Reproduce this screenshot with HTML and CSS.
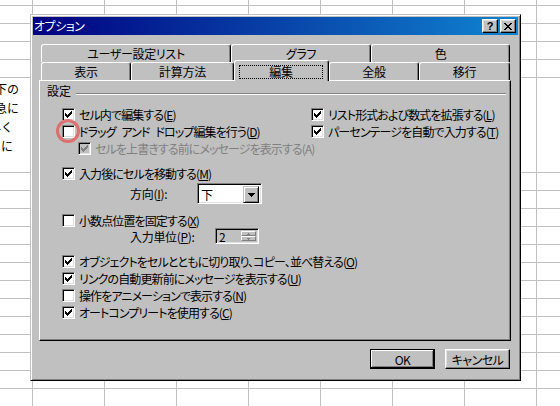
FILE: index.html
```html
<!DOCTYPE html>
<html lang="ja">
<head>
<meta charset="utf-8">
<title>オプション</title>
<link rel="stylesheet" href="styles.css">
</head>
<body>
<div class="sheet">
  <div class="row r-top"></div>
  <div class="row"></div>
  <div class="row"></div>
  <div class="row"></div>
  <div class="row"></div>
  <div class="row r-tall">
    <div class="cell-a">
      <div class="ln ln-long"><span>以下の</span></div>
      <div class="ln ln-long"><span>緊急に</span></div>
      <div class="ln ln-short"><span>早く</span></div>
      <div class="ln ln-short"><span>ように</span></div>
    </div>
  </div>
  <div class="row"></div>
  <div class="row"></div>
  <div class="row"></div>
  <div class="row"></div>
  <div class="row"></div>
  <div class="row"></div>
  <div class="row"></div>
  <div class="row"></div>
  <div class="row"></div>
  <div class="row"></div>
  <div class="row"></div>
  <div class="row"></div>
  <div class="row"></div>
</div>

<div class="dialog">
  <div class="titlebar">
    <span class="title">オプション</span>
    <span class="tbtn help">?</span>
    <span class="tbtn close"><svg width="8" height="7" viewBox="0 0 8 7" shape-rendering="crispEdges"><path fill="#000" d="M0 0h2v1H0zM6 0h2v1H6zM1 1h2v1H1zM5 1h2v1H5zM2 2h4v1H2zM3 3h2v1H3zM2 4h4v1H2zM1 5h2v1H1zM5 5h2v1H5zM0 6h2v1H0zM6 6h2v1H6z"/></svg></span>
  </div>
  <div class="body">
    <div class="tabrow back">
      <div class="tab t-user">ユーザー設定リスト</div>
      <div class="tab t-graph">グラフ</div>
      <div class="tab t-color">色</div>
    </div>
    <div class="tabrow front">
      <div class="tab t-view">表示</div>
      <div class="tab t-calc">計算方法</div>
      <div class="tab t-edit sel"><span class="focus">編集</span></div>
      <div class="tab t-gen">全般</div>
      <div class="tab t-mig">移行</div>
    </div>
    <div class="panel">
      <div class="grouphead"><span class="lbl">設定</span><span class="rule"></span></div>
      <div class="opts">
        <div class="top2">
          <div class="stack col-l">
            <div class="chk"><span class="box"><svg width="7" height="7" viewBox="0 0 7 7" shape-rendering="crispEdges"><path d="M0 2h1v3H0zM1 3h1v3H1zM2 4h1v3H2zM3 3h1v3H3zM4 2h1v3H4zM5 1h1v3H5zM6 0h1v3H6z"/></svg></span><span class="txt">セル内で編集する(<u>E</u>)</span></div>
            <div class="chk"><span class="box"><span class="ring"></span></span><span class="txt">ドラッグ アンド ドロップ編集を行う(<u>D</u>)</span></div>
            <div class="chk sub dis"><span class="box"><svg width="7" height="7" viewBox="0 0 7 7" shape-rendering="crispEdges"><path d="M0 2h1v3H0zM1 3h1v3H1zM2 4h1v3H2zM3 3h1v3H3zM4 2h1v3H4zM5 1h1v3H5zM6 0h1v3H6z"/></svg></span><span class="txt">セルを上書きする前にメッセージを表示する(A)</span></div>
          </div>
          <div class="stack col-r">
            <div class="chk"><span class="box"><svg width="7" height="7" viewBox="0 0 7 7" shape-rendering="crispEdges"><path d="M0 2h1v3H0zM1 3h1v3H1zM2 4h1v3H2zM3 3h1v3H3zM4 2h1v3H4zM5 1h1v3H5zM6 0h1v3H6z"/></svg></span><span class="txt">リスト形式および数式を拡張する(<u>L</u>)</span></div>
            <div class="chk"><span class="box"><svg width="7" height="7" viewBox="0 0 7 7" shape-rendering="crispEdges"><path d="M0 2h1v3H0zM1 3h1v3H1zM2 4h1v3H2zM3 3h1v3H3zM4 2h1v3H4zM5 1h1v3H5zM6 0h1v3H6z"/></svg></span><span class="txt">パーセンテージを自動で入力する(<u>T</u>)</span></div>
          </div>
        </div>

        <div class="chk move"><span class="box"><svg width="7" height="7" viewBox="0 0 7 7" shape-rendering="crispEdges"><path d="M0 2h1v3H0zM1 3h1v3H1zM2 4h1v3H2zM3 3h1v3H3zM4 2h1v3H4zM5 1h1v3H5zM6 0h1v3H6z"/></svg></span><span class="txt">入力後にセルを移動する(<u>M</u>)</span></div>
        <div class="field f-dir">
          <span class="flbl lbl-dir">方向(<u>I</u>):</span>
          <span class="combo"><span class="val">下</span><span class="drop"><svg width="7" height="4" viewBox="0 0 7 4" shape-rendering="crispEdges"><path d="M0 0h7v1H0zM1 1h5v1H1zM2 2h3v1H2zM3 3h1v1H3z"/></svg></span></span>
        </div>

        <div class="chk fixed"><span class="box"></span><span class="txt">小数点位置を固定する(<u>X</u>)</span></div>
        <div class="field f-unit">
          <span class="flbl lbl-unit">入力単位(<u>P</u>):</span>
          <span class="spin"><span class="val">2</span><span class="spinbtns"><span class="sb"><svg width="3" height="2" viewBox="0 0 3 2" shape-rendering="crispEdges"><path fill="#808080" d="M1 0h1v1H1zM0 1h3v1H0z"/></svg></span><span class="sb"><svg width="3" height="2" viewBox="0 0 3 2" shape-rendering="crispEdges"><path fill="#808080" d="M0 0h3v1H0zM1 1h1v1H1z"/></svg></span></span></span>
        </div>

        <div class="stack bottom4">
          <div class="chk"><span class="box"><svg width="7" height="7" viewBox="0 0 7 7" shape-rendering="crispEdges"><path d="M0 2h1v3H0zM1 3h1v3H1zM2 4h1v3H2zM3 3h1v3H3zM4 2h1v3H4zM5 1h1v3H5zM6 0h1v3H6z"/></svg></span><span class="txt">オブジェクトをセルとともに切り取り、コピー、並べ替える(<u>O</u>)</span></div>
          <div class="chk"><span class="box"><svg width="7" height="7" viewBox="0 0 7 7" shape-rendering="crispEdges"><path d="M0 2h1v3H0zM1 3h1v3H1zM2 4h1v3H2zM3 3h1v3H3zM4 2h1v3H4zM5 1h1v3H5zM6 0h1v3H6z"/></svg></span><span class="txt">リンクの自動更新前にメッセージを表示する(<u>U</u>)</span></div>
          <div class="chk"><span class="box"></span><span class="txt">操作をアニメーションで表示する(<u>N</u>)</span></div>
          <div class="chk"><span class="box"><svg width="7" height="7" viewBox="0 0 7 7" shape-rendering="crispEdges"><path d="M0 2h1v3H0zM1 3h1v3H1zM2 4h1v3H2zM3 3h1v3H3zM4 2h1v3H4zM5 1h1v3H5zM6 0h1v3H6z"/></svg></span><span class="txt">オートコンプリートを使用する(<u>C</u>)</span></div>
        </div>
      </div>
    </div>
    <div class="buttons">
      <span class="btn def">OK</span>
      <span class="btn">キャンセル</span>
    </div>
  </div>
</div>
</body>
</html>
```
FILE: styles.css
```css
* { box-sizing: border-box; }
html, body { margin: 0; padding: 0; }
body {
  width: 560px;
  height: 406px;
  overflow: hidden;
  position: relative;
  background: #fff;
  font-family: "Noto Sans CJK JP", "Noto Sans", sans-serif;
  font-size: 12px;
  color: #000;
}

/* spreadsheet behind */
.sheet {
  width: 560px;
  height: 406px;
  overflow: hidden;
  background: linear-gradient(90deg, #c0c0c0 1px, transparent 1px) 32px 0 / 72px 100% repeat-x;
}
.row { height: 18px; border-bottom: 1px solid #c0c0c0; }
.r-top { height: 6px; }
.r-tall { height: 95px; }
.cell-a { width: 32px; overflow: hidden; padding-top: 1px; }
.ln { display: flex; justify-content: flex-end; height: 19px; line-height: 19px; white-space: nowrap; }
.ln-long { padding-right: 13px; }
.ln-short { padding-right: 19px; }

/* dialog window */
.dialog {
  position: absolute;
  left: 30px;
  top: 14px;
  width: 491px;
  height: 367px;
  padding: 2px;
  background: #c0c0c0;
  border: 1px solid;
  border-color: #c0c0c0 #000 #000 #c0c0c0;
  box-shadow: inset 1px 1px #fff, inset -1px -1px #808080;
  font-feature-settings: "palt";
}
.titlebar {
  height: 18px;
  display: flex;
  align-items: center;
  padding: 0 2px 0 1px;
  background: linear-gradient(90deg, #000080, #1084d0);
}
.title { flex: 1; color: #fff; line-height: 18px; letter-spacing: -0.5px; }
.tbtn {
  width: 16px;
  height: 14px;
  flex: none;
  display: flex;
  align-items: center;
  justify-content: center;
  background: #c0c0c0;
  border: 1px solid;
  border-color: #fff #000 #000 #fff;
  box-shadow: inset -1px -1px #808080, inset 1px 1px #dfdfdf;
}
.tbtn + .tbtn { margin-left: 2px; }
.help { font: bold 11px/1 "Liberation Sans", Arial, sans-serif; padding-top: 1px; }
.tbtn svg { display: block; }

.body { padding: 9px 7px 0 6px; }

/* tabs */
.tabrow { display: flex; height: 18px; margin-left: 2px; }
.tab {
  flex: none;
  height: 18px;
  line-height: 17px;
  text-align: center;
  white-space: nowrap;
  letter-spacing: -0.3px;
  background: #c0c0c0;
  border-top: 1px solid #fff;
  border-left: 1px solid #fff;
  border-right: 1px solid #000;
  border-radius: 3px 3px 0 0;
  box-shadow: inset -1px 0 #808080;
}
.t-user { width: 190px; }
.t-graph { width: 140px; }
.t-color { width: 139px; }
.t-view { width: 90px; }
.t-calc { width: 103px; }
.t-edit { width: 95px; }
.t-gen { width: 90px; }
.t-mig { width: 91px; }
.tab.sel {
  height: 21px;
  margin-top: -2px;
  position: relative;
  z-index: 1;
  padding: 4px 5px 2px 4px;
}
.focus { display: block; height: 14px; line-height: 12px; border: 1px dotted #000; }

/* tab panel */
.panel {
  height: 261px;
  padding-top: 3px;
  border: 1px solid;
  border-color: #fff #000 #000 #fff;
  box-shadow: inset -1px -1px #808080;
}
.grouphead { display: flex; height: 14px; margin: 0 4px 0 7px; }
.grouphead .lbl { line-height: 14px; }
.grouphead .rule {
  flex: 1;
  height: 2px;
  margin: 9px 0 0 5px;
  border-top: 1px solid #808080;
  border-bottom: 1px solid #fff;
}

.opts { padding-left: 22px; margin-top: 9px; }
.top2 { display: flex; }
.col-l { width: 249px; }
.stack { display: flex; flex-direction: column; gap: 2px; }

.chk { display: flex; align-items: center; height: 15px; white-space: nowrap; }
.chk .txt { margin-left: 4px; letter-spacing: -0.9px; word-spacing: 4px; }
.box {
  width: 13px;
  height: 13px;
  flex: none;
  position: relative;
  display: flex;
  align-items: center;
  justify-content: center;
  background: #fff;
  border: 1px solid;
  border-color: #808080 #fff #fff #808080;
  box-shadow: inset 1px 1px #000, inset -1px -1px #dfdfdf;
}
.box svg { display: block; }
.box path { fill: #000; }
.sub { margin-left: 16px; }
.dis .txt { color: #808080; }
.dis .box { background: #c0c0c0; }
.dis .box path { fill: #808080; }
.ring {
  position: absolute;
  left: -7px;
  top: -7px;
  width: 24px;
  height: 24px;
  border: 3px solid rgba(226, 96, 96, 0.85);
  border-radius: 50%;
}

.move { margin-top: 10px; }
.field { display: flex; align-items: center; margin-left: 68px; }
.flbl { white-space: nowrap; letter-spacing: -0.3px; }
.lbl-dir { width: 67px; }
.lbl-unit { width: 85px; }
.f-dir { margin-top: 2px; height: 21px; }

.combo {
  width: 65px;
  height: 21px;
  display: flex;
  padding: 2px;
  background: #fff;
  border: 1px solid;
  border-color: #808080 #fff #fff #808080;
  box-shadow: inset 1px 1px #000, inset -1px -1px #dfdfdf;
}
.combo .val { flex: 1; padding-left: 1px; line-height: 17px; }
.drop {
  width: 16px;
  height: 17px;
  flex: none;
  display: flex;
  align-items: center;
  justify-content: center;
  background: #c0c0c0;
  border: 1px solid;
  border-color: #c0c0c0 #000 #000 #c0c0c0;
  box-shadow: inset 1px 1px #fff, inset -1px -1px #808080;
}
.drop svg { display: block; }
.drop path { fill: #000; }

.fixed { margin-top: 9px; }
.f-unit { height: 16px; }
.spin {
  width: 44px;
  height: 16px;
  display: flex;
  padding: 2px;
  background: #c0c0c0;
  border: 1px solid;
  border-color: #808080 #fff #fff #808080;
  box-shadow: inset 1px 1px #000, inset -1px -1px #dfdfdf;
}
.spin .val { flex: 1; padding-left: 1px; line-height: 12px; }
.spinbtns { width: 15px; display: flex; flex-direction: column; }
.sb {
  height: 6px;
  display: flex;
  align-items: center;
  justify-content: center;
  background: #c0c0c0;
  border: 1px solid;
  border-color: #fff #808080 #808080 #fff;
}
.sb svg { display: block; }

.bottom4 { margin-top: 10px; }

/* buttons */
.buttons { display: flex; justify-content: flex-end; gap: 10px; margin: 8px 1px 0 0; }
.btn {
  width: 65px;
  height: 20px;
  display: flex;
  align-items: center;
  justify-content: center;
  letter-spacing: -0.5px;
  background: #c0c0c0;
  border: 1px solid;
  border-color: #fff #000 #000 #fff;
  box-shadow: inset -1px -1px #808080, inset 1px 1px #dfdfdf;
}
.btn.def {
  border-color: #000;
  box-shadow: inset -1px -1px #000, inset 1px 1px #fff, inset -2px -2px #808080;
}
```
